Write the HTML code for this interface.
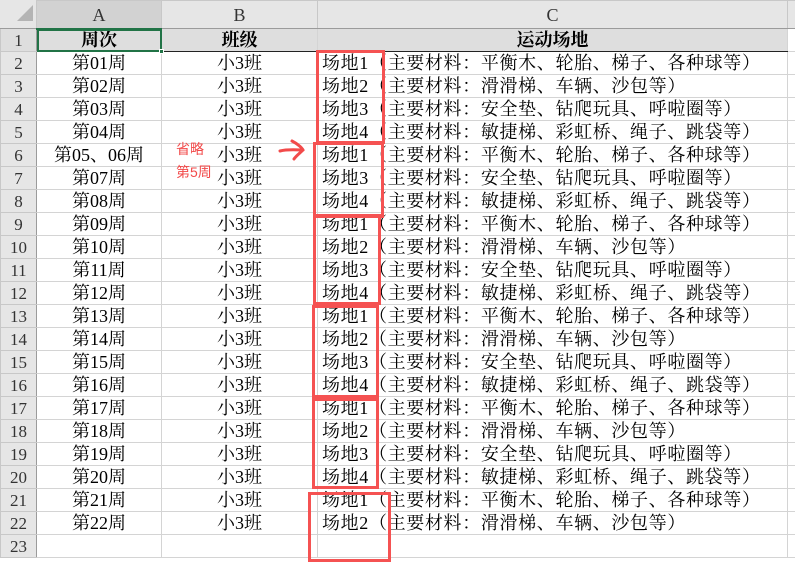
<!DOCTYPE html>
<html><head><meta charset="utf-8"><style>
*{margin:0;padding:0;box-sizing:border-box}
body{width:795px;height:555px;overflow:hidden;background:#fff;position:relative;font-family:"Liberation Serif","Noto Serif CJK SC",serif}
table{border-collapse:collapse;table-layout:fixed;position:absolute;left:0;top:0;width:795px}
td{height:23px;border:1px solid #d4d4d4;font-size:18px;color:#000;white-space:nowrap;overflow:visible;line-height:21px;padding:0}
tr.h td{height:28px;background:#e6e6e6;border-color:#c8c8c8;border-bottom:1px solid #9b9b9b;color:#333;font-size:18px;text-align:center;vertical-align:bottom;line-height:26px}
td.n{background:#e6e6e6;border-color:#c8c8c8;border-right:1px solid #9b9b9b;text-align:center;color:#333;font-size:17px}
td.a,td.b{text-align:center}
td.c{padding-left:4px;letter-spacing:0.65px}
tr.r1 td{background:#dedede;font-weight:bold;text-align:center;border-bottom:1px solid #222}
tr.r1 td.n{border-bottom:1px solid #c8c8c8;font-weight:normal}
.box{position:absolute;border:3px solid #f55252}
.red{position:absolute;color:#f24a4a;font-family:"Liberation Sans","Noto Sans CJK SC",sans-serif;font-size:14px}
</style></head><body>
<table>
<colgroup><col style="width:36px"><col style="width:125px"><col style="width:156px"><col style="width:470px"><col style="width:8px"></colgroup>
<tr class="h"><td style="background:#e6e6e6"></td><td style="background:#d2d2d2;border-bottom:2px solid #217346">A</td><td>B</td><td>C</td><td></td></tr>
<tr class="r1"><td class="n">1</td><td style="outline:2px solid #217346;outline-offset:-2px">周次</td><td>班级</td><td>运动场地</td><td style="background:#fff;border:none"></td></tr>
<tr><td class="n">2</td><td class="a">第01周</td><td class="b">小3班</td><td class="c">场地1（主要材料：平衡木、轮胎、梯子、各种球等）</td><td></td></tr>
<tr><td class="n">3</td><td class="a">第02周</td><td class="b">小3班</td><td class="c">场地2（主要材料：滑滑梯、车辆、沙包等）</td><td></td></tr>
<tr><td class="n">4</td><td class="a">第03周</td><td class="b">小3班</td><td class="c">场地3（主要材料：安全垫、钻爬玩具、呼啦圈等）</td><td></td></tr>
<tr><td class="n">5</td><td class="a">第04周</td><td class="b">小3班</td><td class="c">场地4（主要材料：敏捷梯、彩虹桥、绳子、跳袋等）</td><td></td></tr>
<tr><td class="n">6</td><td class="a">第05、06周</td><td class="b">小3班</td><td class="c">场地1（主要材料：平衡木、轮胎、梯子、各种球等）</td><td></td></tr>
<tr><td class="n">7</td><td class="a">第07周</td><td class="b">小3班</td><td class="c">场地3（主要材料：安全垫、钻爬玩具、呼啦圈等）</td><td></td></tr>
<tr><td class="n">8</td><td class="a">第08周</td><td class="b">小3班</td><td class="c">场地4（主要材料：敏捷梯、彩虹桥、绳子、跳袋等）</td><td></td></tr>
<tr><td class="n">9</td><td class="a">第09周</td><td class="b">小3班</td><td class="c">场地1（主要材料：平衡木、轮胎、梯子、各种球等）</td><td></td></tr>
<tr><td class="n">10</td><td class="a">第10周</td><td class="b">小3班</td><td class="c">场地2（主要材料：滑滑梯、车辆、沙包等）</td><td></td></tr>
<tr><td class="n">11</td><td class="a">第11周</td><td class="b">小3班</td><td class="c">场地3（主要材料：安全垫、钻爬玩具、呼啦圈等）</td><td></td></tr>
<tr><td class="n">12</td><td class="a">第12周</td><td class="b">小3班</td><td class="c">场地4（主要材料：敏捷梯、彩虹桥、绳子、跳袋等）</td><td></td></tr>
<tr><td class="n">13</td><td class="a">第13周</td><td class="b">小3班</td><td class="c">场地1（主要材料：平衡木、轮胎、梯子、各种球等）</td><td></td></tr>
<tr><td class="n">14</td><td class="a">第14周</td><td class="b">小3班</td><td class="c">场地2（主要材料：滑滑梯、车辆、沙包等）</td><td></td></tr>
<tr><td class="n">15</td><td class="a">第15周</td><td class="b">小3班</td><td class="c">场地3（主要材料：安全垫、钻爬玩具、呼啦圈等）</td><td></td></tr>
<tr><td class="n">16</td><td class="a">第16周</td><td class="b">小3班</td><td class="c">场地4（主要材料：敏捷梯、彩虹桥、绳子、跳袋等）</td><td></td></tr>
<tr><td class="n">17</td><td class="a">第17周</td><td class="b">小3班</td><td class="c">场地1（主要材料：平衡木、轮胎、梯子、各种球等）</td><td></td></tr>
<tr><td class="n">18</td><td class="a">第18周</td><td class="b">小3班</td><td class="c">场地2（主要材料：滑滑梯、车辆、沙包等）</td><td></td></tr>
<tr><td class="n">19</td><td class="a">第19周</td><td class="b">小3班</td><td class="c">场地3（主要材料：安全垫、钻爬玩具、呼啦圈等）</td><td></td></tr>
<tr><td class="n">20</td><td class="a">第20周</td><td class="b">小3班</td><td class="c">场地4（主要材料：敏捷梯、彩虹桥、绳子、跳袋等）</td><td></td></tr>
<tr><td class="n">21</td><td class="a">第21周</td><td class="b">小3班</td><td class="c">场地1（主要材料：平衡木、轮胎、梯子、各种球等）</td><td></td></tr>
<tr><td class="n">22</td><td class="a">第22周</td><td class="b">小3班</td><td class="c">场地2（主要材料：滑滑梯、车辆、沙包等）</td><td></td></tr>
<tr><td class="n">23</td><td></td><td></td><td></td><td></td></tr>
</table>
<div style="position:absolute;left:0;top:0;width:36px;height:28px;background:#e6e6e6"></div>
<div style="position:absolute;left:17px;top:5px;width:0;height:0;border-left:16px solid transparent;border-bottom:16px solid #b4b4b4"></div>
<div style="position:absolute;left:159px;top:49px;width:5px;height:5px;background:#217346;border:1px solid #fff"></div>
<div class="box" style="left:316px;top:50px;width:69px;height:94px"></div>
<div class="box" style="left:313px;top:142px;width:71px;height:76px"></div>
<div class="box" style="left:313px;top:214px;width:68px;height:91px"></div>
<div class="box" style="left:312px;top:305px;width:67px;height:93px"></div>
<div class="box" style="left:312px;top:398px;width:67px;height:91px"></div>
<div class="box" style="left:308px;top:492px;width:83px;height:70px"></div>
<div class="red" style="left:176px;top:139px">省略</div>
<div class="red" style="left:176px;top:162px">第5周</div>
<svg style="position:absolute;left:278px;top:136px" width="28" height="26"><path d="M2 15 C10 13 18 14 25 14 M14 5 C20 8 24 12 25 14 C22 17 18 20 16 23" stroke="#f24a4a" stroke-width="3" fill="none" stroke-linecap="round"/></svg>
</body></html>
